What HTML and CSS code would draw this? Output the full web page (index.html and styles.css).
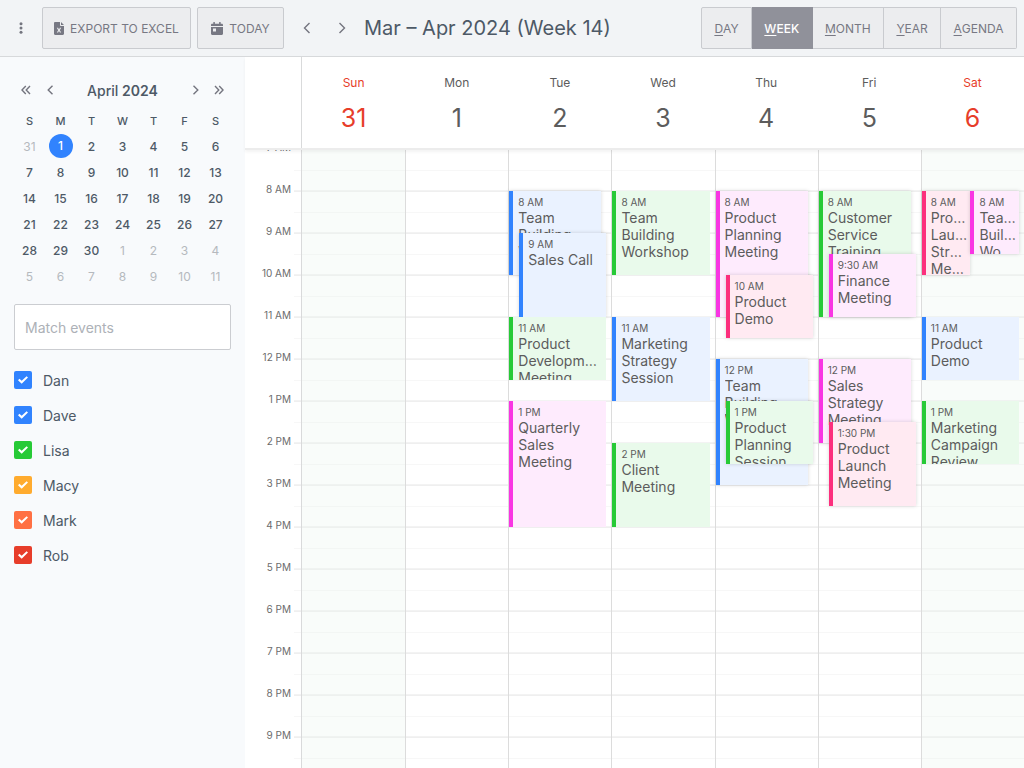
FILE: index.html
```html
<!DOCTYPE html>
<html lang="en">
<head>
<meta charset="utf-8">
<title>Calendar</title>
<link rel="stylesheet" href="styles.css">
</head>
<body>
<header class="toolbar">
  <button class="icon-btn menu-btn" aria-label="Menu"><svg width="4" height="12" viewBox="0 0 4 12"><circle cx="2" cy="1.7" r="1.5"/><circle cx="2" cy="6" r="1.5"/><circle cx="2" cy="10.3" r="1.5"/></svg></button>
  <button class="btn export-btn"><svg width="10" height="13" viewBox="0 0 10 13"><path fill-rule="evenodd" d="M1.2 0H6v3.2c0 .5.3.8.8.8H10v7.8c0 .7-.5 1.2-1.2 1.2H1.2C.5 13 0 12.500 0 11.800V1.200C0 .5.5 0 1.200 0zM2.800 5.800 4.200 8.200 2.800 10.600H4.100L5 9l.9 1.600h1.300L5.800 8.200 7.200 5.800H5.900L5 7.400 4.100 5.800zM7 0l3 3H7z"/></svg>EXPORT TO EXCEL</button>
  <button class="btn today-btn"><svg width="12" height="13" viewBox="0 0 12 13"><path fill-rule="evenodd" d="M2.300.4c0-.5 1.600-.5 1.600 0v1.300h4.200V.4c0-.5 1.600-.5 1.600 0v1.300h1.100c.7 0 1.200.5 1.200 1.200v1.100H0V2.900c0-.7.5-1.200 1.200-1.200h1.100zM0 4.900h12v6.900c0 .7-.5 1.200-1.200 1.200H1.200C.5 13 0 12.500 0 11.800zM2 6.500v3h3v-3z"/></svg>TODAY</button>
  <button class="icon-btn prev-btn" aria-label="Previous week"><svg width="8" height="12" viewBox="0 0 8 12"><path class="stroke" d="M6.500 1 1.500 6l5 5"/></svg></button>
  <button class="icon-btn next-btn" aria-label="Next week"><svg width="8" height="12" viewBox="0 0 8 12"><path class="stroke" d="m1.500 1 5 5-5 5"/></svg></button>
  <h1 class="title">Mar – Apr 2024 (Week 14)</h1>
  <div class="views">
    <button class="view"><u>D</u>AY</button>
    <button class="view active" aria-pressed="true"><u>W</u>EEK</button>
    <button class="view"><u>M</u>ONTH</button>
    <button class="view"><u>Y</u>EAR</button>
    <button class="view"><u>A</u>GENDA</button>
  </div>
</header>
<div class="content">
  <aside class="sidebar">
    <div class="picker-head">
      <button class="icon-btn picker-nav" aria-label="Previous year"><svg width="10" height="10" viewBox="0 0 10 10"><path class="stroke" d="M4.800 1 1 5l3.800 4M9 1 5.200 5 9 9"/></svg></button>
      <button class="icon-btn picker-nav" aria-label="Previous month"><svg width="7" height="10" viewBox="0 0 7 10"><path class="stroke" d="M5.500.700 1.200 5l4.300 4.300"/></svg></button>
      <div class="picker-title">April <b>2024</b></div>
      <button class="icon-btn picker-nav" aria-label="Next month"><svg width="7" height="10" viewBox="0 0 7 10"><path class="stroke" d="M1.500.700 5.800 5 1.500 9.300"/></svg></button>
      <button class="icon-btn picker-nav" aria-label="Next year"><svg width="10" height="10" viewBox="0 0 10 10"><path class="stroke" d="M1 1l3.800 4L1 9M5.200 1 9 5 5.200 9"/></svg></button>
    </div>
    <table class="picker">
      <thead><tr><th>S</th><th>M</th><th>T</th><th>W</th><th>T</th><th>F</th><th>S</th></tr></thead>
      <tbody>
        <tr><td class="other">31</td><td><span class="selected">1</span></td><td>2</td><td>3</td><td>4</td><td>5</td><td>6</td></tr>
        <tr><td>7</td><td>8</td><td>9</td><td>10</td><td>11</td><td>12</td><td>13</td></tr>
        <tr><td>14</td><td>15</td><td>16</td><td>17</td><td>18</td><td>19</td><td>20</td></tr>
        <tr><td>21</td><td>22</td><td>23</td><td>24</td><td>25</td><td>26</td><td>27</td></tr>
        <tr><td>28</td><td>29</td><td>30</td><td class="other">1</td><td class="other">2</td><td class="other">3</td><td class="other">4</td></tr>
        <tr><td class="other">5</td><td class="other">6</td><td class="other">7</td><td class="other">8</td><td class="other">9</td><td class="other">10</td><td class="other">11</td></tr>
      </tbody>
    </table>
    <input class="filter" type="text" placeholder="Match events" aria-label="Match events">
    <div class="people">
      <label class="person"><input class="check blue" type="checkbox" checked>Dan</label>
      <label class="person"><input class="check blue" type="checkbox" checked>Dave</label>
      <label class="person"><input class="check green" type="checkbox" checked>Lisa</label>
      <label class="person"><input class="check amber" type="checkbox" checked>Macy</label>
      <label class="person"><input class="check orange" type="checkbox" checked>Mark</label>
      <label class="person"><input class="check red" type="checkbox" checked>Rob</label>
    </div>
  </aside>
  <main class="week">
    <div class="week-head">
      <div class="corner"></div>
      <div class="days">
        <div class="day-name weekend">Sun<strong>31</strong></div>
        <div class="day-name">Mon<strong>1</strong></div>
        <div class="day-name">Tue<strong>2</strong></div>
        <div class="day-name">Wed<strong>3</strong></div>
        <div class="day-name">Thu<strong>4</strong></div>
        <div class="day-name">Fri<strong>5</strong></div>
        <div class="day-name weekend">Sat<strong>6</strong></div>
      </div>
    </div>
    <div class="week-body">
      <div class="axis">
        <div class="hours">
          <span>7 AM</span><span>8 AM</span><span>9 AM</span><span>10 AM</span><span>11 AM</span><span>12 PM</span><span>1 PM</span><span>2 PM</span><span>3 PM</span><span>4 PM</span><span>5 PM</span><span>6 PM</span><span>7 PM</span><span>8 PM</span><span>9 PM</span>
        </div>
        <div class="ticks"></div>
      </div>
      <div class="days lines">
        <div class="day weekend"></div>
        <div class="day"></div>
        <div class="day">
          <article class="event blue under from-8 long-4"><time>8 AM</time><p>Team Building Workshop</p></article>
          <article class="event blue over from-9 long-4"><time>9 AM</time><p>Sales Call</p></article>
          <article class="event green from-11 long-3"><time>11 AM</time><p>Product Development Meeting</p></article>
          <article class="event magenta from-13 long-6"><time>1 PM</time><p>Quarterly Sales Meeting</p></article>
        </div>
        <div class="day">
          <article class="event green from-8 long-4"><time>8 AM</time><p>Team Building Workshop</p></article>
          <article class="event blue from-11 long-4"><time>11 AM</time><p>Marketing Strategy Session</p></article>
          <article class="event green from-14 long-4"><time>2 PM</time><p>Client Meeting</p></article>
        </div>
        <div class="day">
          <article class="event magenta under from-8 long-6"><time>8 AM</time><p>Product Planning Meeting</p></article>
          <article class="event pink over from-10 long-3"><time>10 AM</time><p>Product Demo</p></article>
          <article class="event blue under from-12 long-6"><time>12 PM</time><p>Team Building Workshop</p></article>
          <article class="event green over from-13 long-3"><time>1 PM</time><p>Product Planning Session</p></article>
        </div>
        <div class="day">
          <article class="event green under from-8 long-6"><time>8 AM</time><p>Customer Service Training</p></article>
          <article class="event magenta over from-9-30 long-3"><time>9:30 AM</time><p>Finance Meeting</p></article>
          <article class="event magenta under from-12 long-4"><time>12 PM</time><p>Sales Strategy Meeting</p></article>
          <article class="event pink over from-13-30 long-4"><time>1:30 PM</time><p>Product Launch Meeting</p></article>
        </div>
        <div class="day weekend">
          <article class="event pink left-half from-8 long-4"><time>8 AM</time><p>Product Launch Strategy Meeting</p></article>
          <article class="event magenta right-half from-8 long-3"><time>8 AM</time><p>Tea… Building Workshop</p></article>
          <article class="event blue from-11 long-3"><time>11 AM</time><p>Product Demo</p></article>
          <article class="event green from-13 long-3"><time>1 PM</time><p>Marketing Campaign Review</p></article>
        </div>
      </div>
    </div>
  </main>
</div>
</body>
</html>
```

FILE: styles.css
```css
* { box-sizing: border-box; }

body {
  margin: 0;
  height: 100vh;
  display: flex;
  flex-direction: column;
  overflow: hidden;
  background: #fff;
  color: #4d5966;
  font-family: Inter, "Liberation Sans", sans-serif;
  font-size: 14px;
}

button, input { font: inherit; color: inherit; }
svg { display: block; fill: currentColor; }
.stroke { fill: none; stroke: currentColor; stroke-width: 1.4; }

/* Toolbar */
.toolbar {
  display: flex;
  align-items: center;
  flex: none;
  padding: 7px 7px 7px 14px;
  background: #f2f4f6;
  border-bottom: 1px solid #d7d9db;
}

.icon-btn {
  display: flex;
  align-items: center;
  justify-content: center;
  padding: 0;
  border: 0;
  background: none;
  color: #74757f;
}

.menu-btn { width: 14px; height: 42px; margin-right: 14px; }
.prev-btn, .next-btn { width: 35px; height: 42px; }
.prev-btn { margin-left: 5px; }

.btn, .view {
  display: flex;
  align-items: center;
  justify-content: center;
  height: 42px;
  background: #ecedef;
  border: 1px solid #c9cbcf;
  color: #777883;
  font-size: 12px;
  white-space: nowrap;
}

.btn { gap: 6px; padding: 0; border-radius: 2px; }
.export-btn { width: 149px; margin-right: 6px; }
.today-btn { width: 87px; }

.title {
  margin: 0 0 0 5px;
  font-size: 20px;
  line-height: 28px;
  font-weight: 400;
  white-space: nowrap;
}

.views { display: flex; width: 316px; margin-left: auto; }
.view { flex: 1 0 auto; padding: 0 12px; }
.view + .view { border-left: 0; }
.view:first-child { border-radius: 2px 0 0 2px; }
.view:last-child { border-radius: 0 2px 2px 0; }
.view.active { background: #90919a; border-color: #90919a; color: #fff; font-weight: 500; }
.view u { text-underline-offset: 2px; }

.content { display: flex; flex: 1; min-height: 0; }

/* Sidebar */
.sidebar {
  flex: none;
  width: 245px;
  padding: 20px 14px;
  background: #f8fafc;
}

.picker-head { display: flex; align-items: center; height: 26px; }
.picker-nav { width: 24px; height: 26px; }
.picker-title { flex: 1; text-align: center; font-size: 14px; font-weight: 500; }
.picker-title b { font-weight: 600; }

.picker {
  width: 100%;
  table-layout: fixed;
  border-collapse: collapse;
  margin: 5px 0 15px;
  text-align: center;
}
.picker th { height: 25px; padding: 0; font-size: 11px; font-weight: 500; }
.picker td { height: 26px; padding: 0; font-size: 12px; font-weight: 500; }
.picker .other { color: #b5b9be; font-weight: 400; }
.selected {
  display: block;
  width: 24px;
  margin: 0 auto;
  border-radius: 12px;
  line-height: 24px;
  background: #3183fe;
  color: #fff;
}

.filter {
  display: block;
  width: 100%;
  height: 46px;
  padding: 0 10px;
  border: 1px solid #cbcdd1;
  border-radius: 2px;
  background: #fff;
}
.filter::placeholder { color: #adb1b7; opacity: 1; }

.people { display: flex; flex-direction: column; gap: 15px; margin-top: 20px; }
.person { display: flex; align-items: center; gap: 11px; height: 20px; }
.check {
  appearance: none;
  display: grid;
  place-items: center;
  width: 18px;
  height: 18px;
  margin: 0;
  border-radius: 2px;
  background: var(--tone);
}
.check:checked::before {
  content: "";
  width: 10px;
  height: 8px;
  background: #fff;
  clip-path: polygon(0 52%, 14% 34%, 37% 60%, 86% 2%, 100% 20%, 37% 98%);
}

.blue { --tone: #3183fe; --fill: #eaf2ff; }
.green { --tone: #27ca37; --fill: #e9faeb; }
.magenta { --tone: #f935e3; --fill: #feebfd; }
.pink { --tone: #fc2f7d; --fill: #ffeaf2; }
.amber { --tone: #ffab2e; }
.orange { --tone: #ff7043; }
.red { --tone: #e73d2a; }

/* Week view */
.week { flex: 1; min-width: 0; display: flex; flex-direction: column; }
.week-head {
  display: flex;
  flex: none;
  height: 93px;
  position: relative;
  z-index: 1;
  border-bottom: 2px solid #ececec;
  box-shadow: 0 2px 3px rgba(0, 0, 0, .05);
}
.corner, .axis { flex: none; width: 57px; border-right: 1px solid #d9dadb; }
.days { flex: 1; min-width: 0; display: grid; grid-template-columns: repeat(7, minmax(0, 1fr)); }
.day-name {
  display: flex;
  flex-direction: column;
  align-items: center;
  padding-top: 17px;
  font-size: 12px;
  line-height: 18px;
  color: #5c5c5c;
}
.day-name strong { margin-top: 9px; font-size: 25px; line-height: 34px; font-weight: 400; }
.day-name.weekend { color: #e73d2a; }

.week-body {
  flex: 1;
  min-height: 0;
  display: flex;
  overflow: hidden;
  margin-top: -1px;
}
.axis { display: flex; }
.hours { flex: 1; margin-top: -23px; }
.hours span {
  display: flex;
  align-items: center;
  justify-content: flex-end;
  height: 42px;
  padding-right: 3px;
  font-size: 10px;
  color: #6c6c6c;
}
.ticks { width: 7px; }
.ticks, .lines {
  background: repeating-linear-gradient(#efefef 0 1px, transparent 1px 21px, #f7f7f7 21px 22px, transparent 22px 41px, #f3f3f3 41px 42px);
}

.day {
  display: grid;
  grid-template-columns: repeat(2, minmax(0, 1fr));
  grid-template-rows: repeat(30, 21px);
  padding-right: 5px;
}
.day + .day { border-left: 1px solid #dcdcdc; }
.day.weekend { background: rgba(236, 244, 240, .3); }

.event {
  grid-column: 1 / 3;
  overflow: hidden;
  padding: 4px 6px 0 5px;
  border-left: 4px solid var(--tone);
  background: var(--fill);
  color: #5c5c5c;
}
.event time { display: block; font-size: 10px; line-height: 14px; }
.event p {
  margin: 0;
  overflow: hidden;
  text-overflow: ellipsis;
  font-size: 14px;
  line-height: 17px;
}
.under, .over, .left-half, .right-half { box-shadow: 0 0 4px rgba(0, 0, 0, .16); }
.under { margin-right: 5px; }
.over { margin-left: 10px; }
.left-half, .right-half { padding-right: 3px; }
.left-half { grid-column: 1; }
.right-half { grid-column: 2; }

/* Half-hour rows, counted from 7 AM */
.from-8 { grid-row-start: 3; }
.from-9 { grid-row-start: 5; }
.from-9-30 { grid-row-start: 6; }
.from-10 { grid-row-start: 7; }
.from-11 { grid-row-start: 9; }
.from-12 { grid-row-start: 11; }
.from-13 { grid-row-start: 13; }
.from-13-30 { grid-row-start: 14; }
.from-14 { grid-row-start: 15; }
.long-3 { grid-row-end: span 3; }
.long-4 { grid-row-end: span 4; }
.long-6 { grid-row-end: span 6; }
```
